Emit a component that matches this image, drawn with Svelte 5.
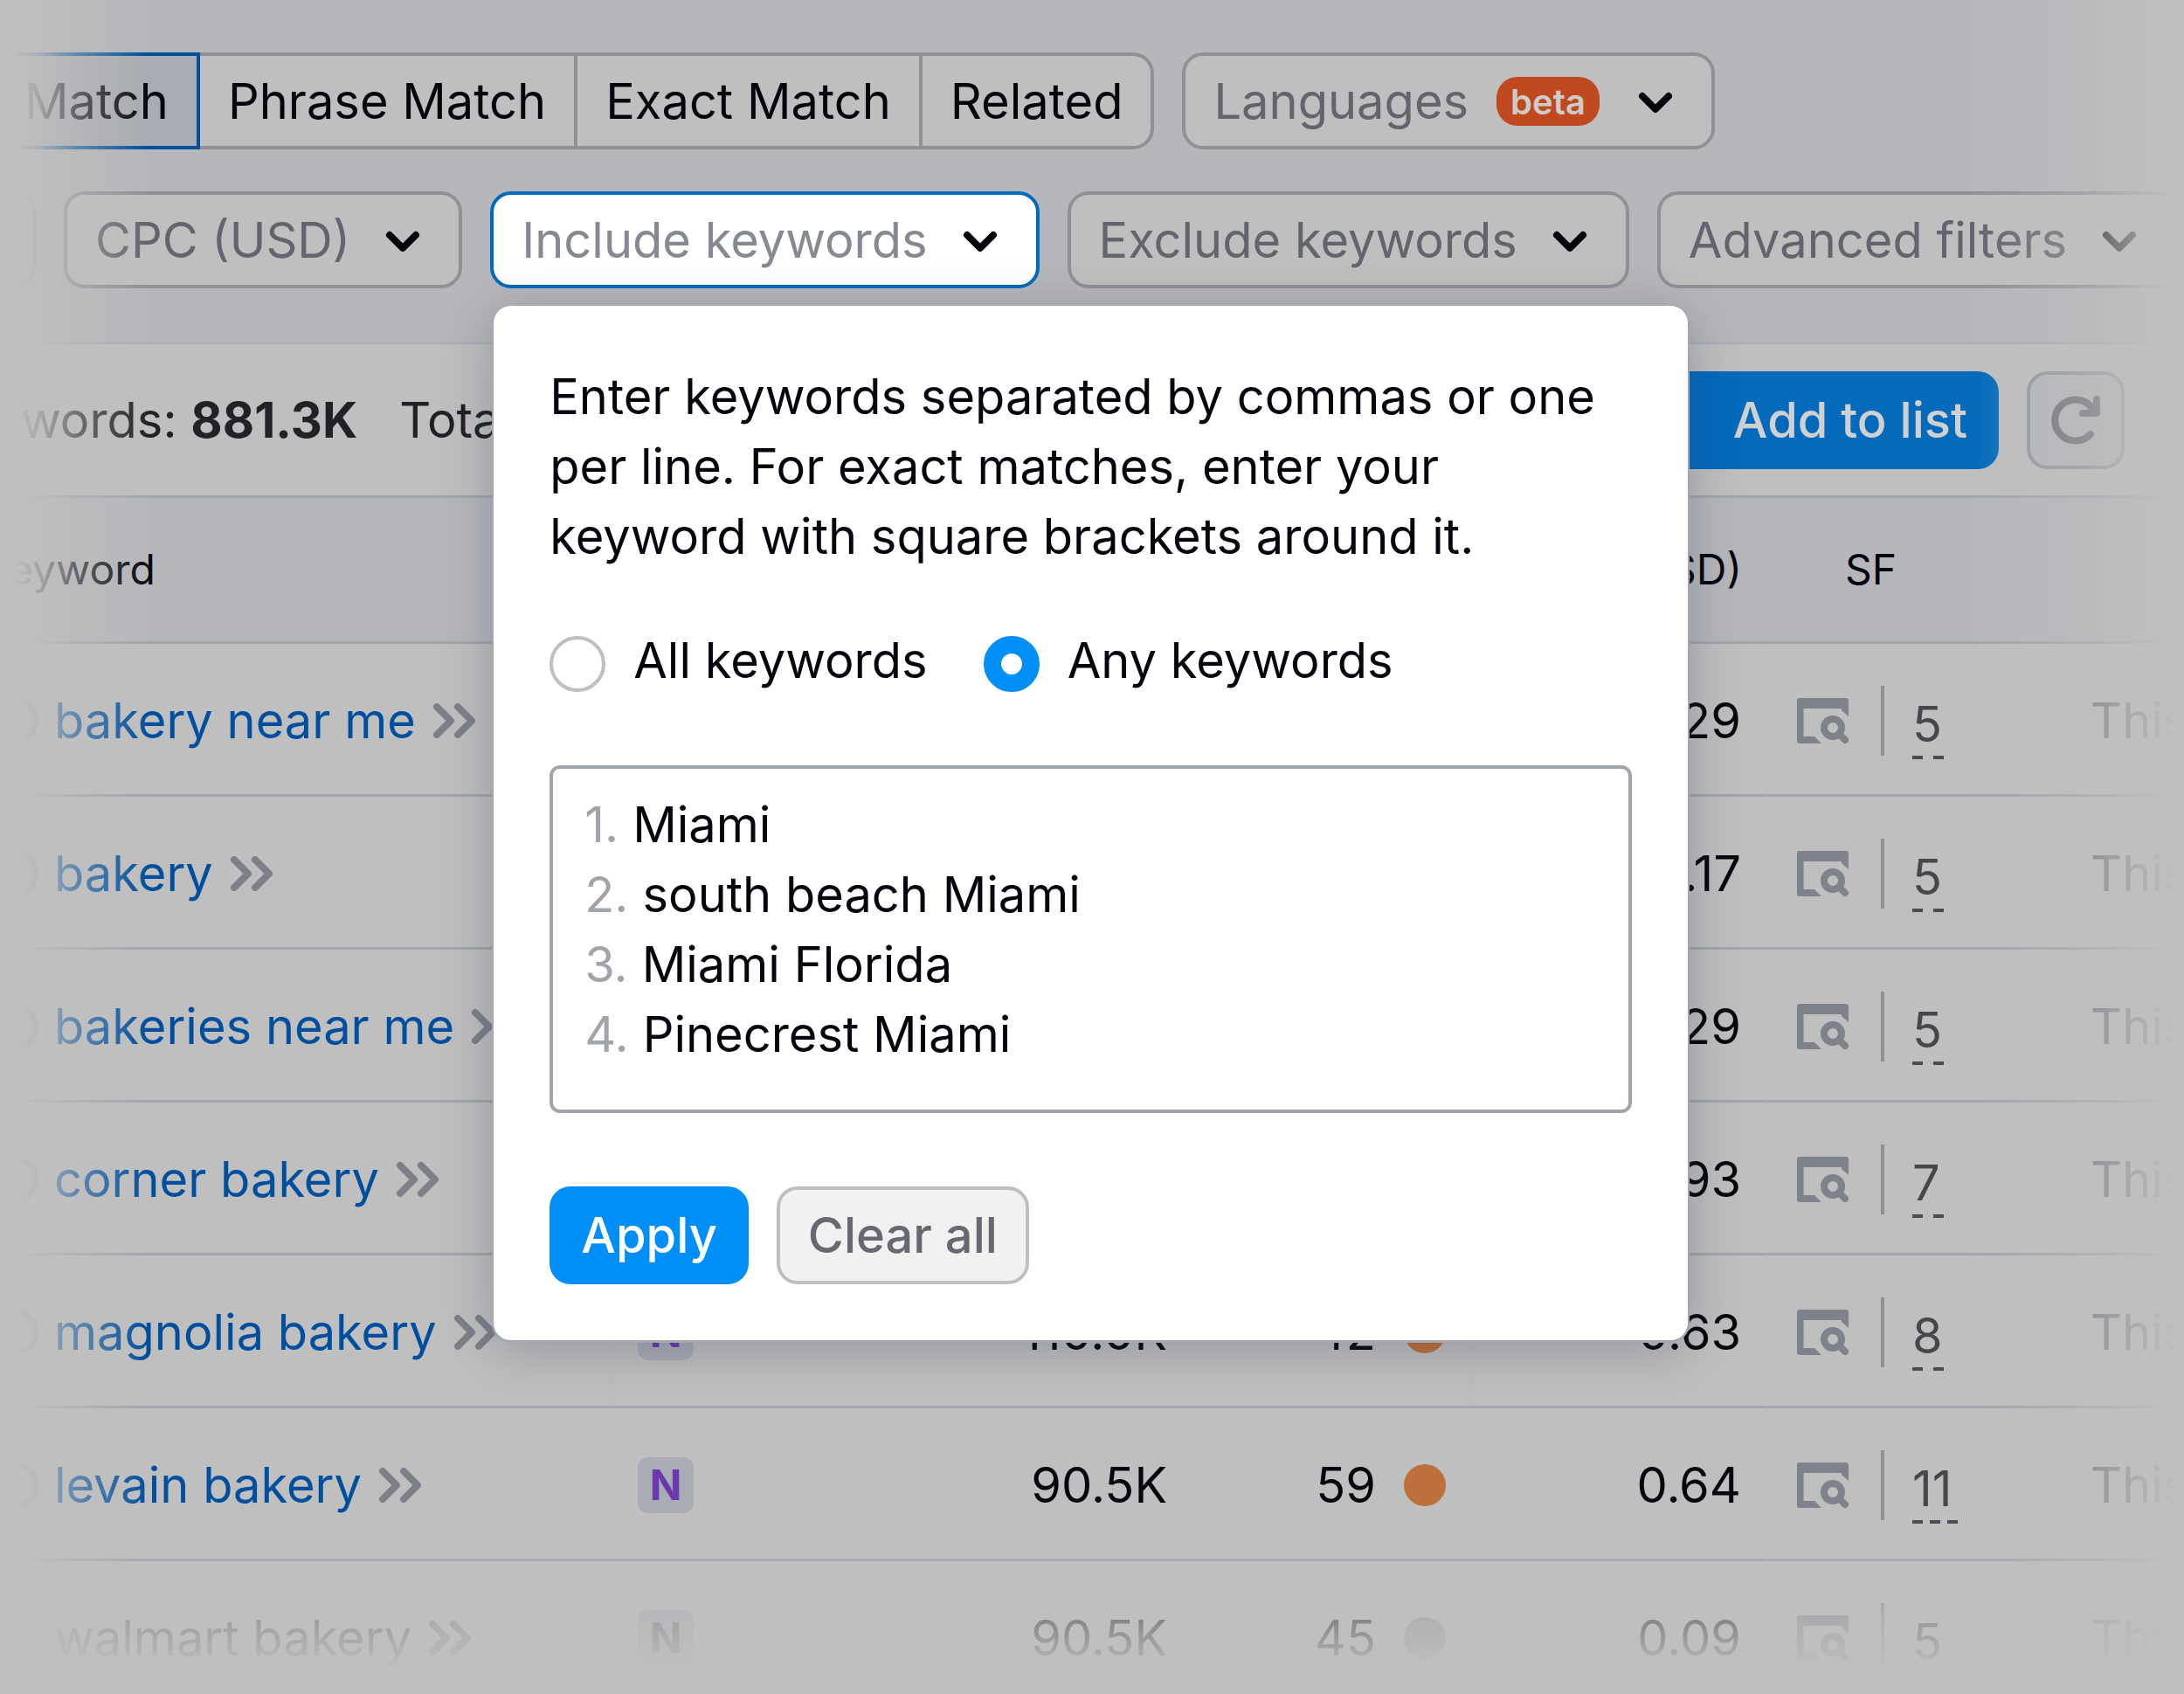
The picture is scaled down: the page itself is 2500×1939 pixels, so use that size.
<script>
  const matchTypes = ['Match', 'Phrase Match', 'Exact Match', 'Related'];
  let activeType = $state('Match');
  let mode = $state('any');
  let terms = $state(['Miami', 'south beach Miami', 'Miami Florida', 'Pinecrest Miami']);

  const rows = [
    { keyword: 'bakery near me', cpc: '1.29', sf: '5' },
    { keyword: 'bakery', cpc: '1.17', sf: '5' },
    { keyword: 'bakeries near me', cpc: '1.29', sf: '5' },
    { keyword: 'corner bakery', cpc: '0.93', sf: '7' },
    { keyword: 'magnolia bakery', intent: 'N', volume: '110.0K', kd: '42', cpc: '0.63', sf: '8' },
    { keyword: 'levain bakery', intent: 'N', volume: '90.5K', kd: '59', cpc: '0.64', sf: '11' },
    { keyword: 'walmart bakery', intent: 'N', volume: '90.5K', kd: '45', cpc: '0.09', sf: '5' }
  ];
</script>

{#snippet chevron()}
  <svg class="chevron" viewBox="0 0 40 26" aria-hidden="true">
    <path d="M5 5 20 20 35 5" />
  </svg>
{/snippet}

<main class="page">
  <section class="filters">
    <div class="bar">
      <div class="segments" role="group" aria-label="Match type">
        {#each matchTypes as type}
          <button class="segment" class:active={activeType === type} onclick={() => (activeType = type)}>{type}</button>
        {/each}
      </div>
      <button class="pill">Languages <span class="beta">beta</span>{@render chevron()}</button>
    </div>
    <div class="bar">
      <button class="pill stub" aria-label="More filters"></button>
      <button class="pill">CPC (USD) {@render chevron()}</button>
      <div class="anchor">
        <button class="pill open" aria-expanded="true">Include keywords {@render chevron()}</button>
        <div class="popover" role="dialog" aria-label="Include keywords">
          <p>Enter keywords separated by commas or one per line. For exact matches, enter your keyword with square brackets around it.</p>
          <div class="radios">
            <label><input type="radio" name="mode" value="all" bind:group={mode} /><span>All keywords</span></label>
            <label><input type="radio" name="mode" value="any" bind:group={mode} /><span>Any keywords</span></label>
          </div>
          <div class="terms">
            {#each terms as _, i}
              <label class="term"><span>{i + 1}.</span><input type="text" bind:value={terms[i]} /></label>
            {/each}
          </div>
          <div class="actions">
            <button class="apply">Apply</button>
            <button class="clear">Clear all</button>
          </div>
        </div>
      </div>
      <button class="pill">Exclude keywords {@render chevron()}</button>
      <button class="pill">Advanced filters {@render chevron()}</button>
    </div>
  </section>

  <section class="summary">
    <span>words: <b>881.3K</b></span>
    <span>Total</span>
    <div class="tools">
      <button class="add">Add to list</button>
      <button class="refresh" aria-label="Refresh">
        <svg viewBox="0 0 56 56" aria-hidden="true">
          <path d="M45 44A23.500 23.500 0 1 1 49 18" />
          <path d="M52 4V20H36" />
        </svg>
      </button>
    </div>
  </section>

  <table>
    <colgroup>
      <col class="c-keyword" /><col class="c-intent" /><col class="c-volume" /><col class="c-kd" /><col class="c-cpc" /><col class="c-sf" /><col />
    </colgroup>
    <thead>
      <tr>
        <th class="first">eyword</th>
        <th></th>
        <th></th>
        <th></th>
        <th class="num">CPC (USD)</th>
        <th class="center">SF</th>
        <th></th>
      </tr>
    </thead>
    <tbody>
      {#each rows as row}
        <tr>
          <td>
            <div class="keyword">
              <span class="ring"></span>
              <a href="#keyword">{row.keyword}</a>
              <svg class="double" viewBox="0 0 48 40" aria-hidden="true">
                <path d="M4 4 20 20 4 36M28 4 44 20 28 36" />
              </svg>
            </div>
          </td>
          <td class="open-edge">{#if row.intent}<span class="intent">{row.intent}</span>{/if}</td>
          <td class="num open-edge">{row.volume ?? ''}</td>
          <td>{#if row.kd}<div class="kd">{row.kd}<span class="dot"></span></div>{/if}</td>
          <td class="num">{row.cpc}</td>
          <td>
            <div class="serp">
              <svg viewBox="0 0 60 52" aria-hidden="true">
                <path class="frame" d="M3 0H56Q59 0 59 3V21L51 14V12H7.500V44H20L28 52H3Q0 52 0 49V3Q0 0 3 0Z" />
                <circle cx="41" cy="34" r="10" />
                <path class="handle" d="M48 41 55 48" />
              </svg>
              <span class="rule"></span>
              <a class="count" class:wide={row.sf.length > 1} href="#serp">{row.sf}</a>
            </div>
          </td>
          <td class="updated">This</td>
        </tr>
      {/each}
    </tbody>
  </table>
</main>

<style>
  :global(body) {
    margin: 0;
    background: #bfbfbf;
  }
  .page {
    position: relative;
    height: 100vh;
    overflow: hidden;
    background: #bfbfbf;
    color: #05060d;
    font: 400 56px/80px Inter, sans-serif;
  }
  .page::before,
  .page::after {
    content: '';
    position: absolute;
    inset: 0;
    z-index: 1;
    pointer-events: none;
  }
  .page::before {
    background: linear-gradient(90deg, #bfbfbf 16px, rgba(191, 191, 191, 0.85) 46px, rgba(191, 191, 191, 0.5) 88px, transparent 170px, transparent calc(100% - 240px), rgba(191, 191, 191, 0.45) calc(100% - 110px), rgba(191, 191, 191, 0.8) calc(100% - 50px), #bfbfbf calc(100% - 8px));
  }
  .page::after {
    background: linear-gradient(0deg, #bfbfbf 24px, rgba(191, 191, 191, 0.9) 44px, rgba(191, 191, 191, 0.72) 80px, rgba(191, 191, 191, 0.5) 110px, rgba(191, 191, 191, 0.2) 150px, transparent 200px);
  }
  button,
  input {
    font: inherit;
    color: inherit;
    margin: 0;
  }
  button {
    box-sizing: border-box;
    cursor: pointer;
    white-space: nowrap;
  }
  a {
    text-decoration: none;
  }

  .filters {
    display: flex;
    flex-direction: column;
    gap: 48px;
    padding: 60px 0 62px;
    background: #b6b7bb;
    border-bottom: 2px solid #a6abb2;
  }
  .bar {
    display: flex;
    gap: 32px;
  }
  .segments {
    display: flex;
  }
  .segment {
    height: 111px;
    padding: 0 32px;
    border: 4px solid #8f9197;
    border-left-width: 0;
    background: #bfbfbf;
  }
  .segment:last-child {
    border-radius: 0 24px 24px 0;
  }
  .segment.active {
    padding-left: 28px;
    border-color: #00509e;
    background: #a9acb2;
  }
  .pill {
    display: flex;
    align-items: center;
    flex: none;
    height: 111px;
    padding: 0 44px 0 32px;
    border: 4px solid #8f9197;
    border-radius: 24px;
    background: #bfbfbf;
    color: #62656e;
  }
  .pill.stub {
    width: 41px;
    padding: 0;
    border-left: 0;
    border-radius: 0 24px 24px 0;
  }
  .pill.open {
    border-color: #006abd;
    background: #fff;
    color: #858992;
  }
  .chevron {
    width: 40px;
    height: 26px;
    margin: 4px 0 0 40px;
    fill: none;
    stroke: #05060d;
    stroke-width: 8;
    stroke-linecap: round;
    stroke-linejoin: round;
  }
  .beta {
    height: 56px;
    margin-left: 32px;
    padding: 0 16px;
    border-radius: 24px;
    background: #bf4a1f;
    color: #cfcbc9;
    font-size: 40px;
    font-weight: 600;
    line-height: 58px;
  }
  .beta + .chevron {
    margin-left: 44px;
  }

  .anchor {
    position: relative;
    z-index: 2;
  }
  .popover {
    position: absolute;
    top: calc(100% + 20px);
    left: 4px;
    box-sizing: border-box;
    width: 1367px;
    padding: 64px;
    border-radius: 20px;
    background: #fff;
    box-shadow: 0 1px 0 2px #a4a8ae, 0 10px 60px rgba(40, 50, 80, 0.3);
  }
  .popover p {
    margin: 0;
  }
  .radios {
    display: flex;
    gap: 64px;
    margin: 62px 0 80px;
  }
  .radios label {
    display: flex;
    align-items: flex-start;
    gap: 32px;
  }
  .radios input {
    appearance: none;
    box-sizing: border-box;
    width: 64px;
    height: 64px;
    margin-top: 12px;
    border: 4px solid #bfbfbf;
    border-radius: 50%;
    background: #fff;
  }
  .radios input:checked {
    border: 20px solid #008ff8;
  }
  .terms {
    padding: 24px 36px 46px;
    border: 4px solid #a0a4ab;
    border-radius: 12px;
  }
  .term {
    display: flex;
    gap: 16px;
    color: #a0a4ab;
  }
  .term input {
    flex: 1;
    min-width: 0;
    height: 80px;
    padding: 0;
    border: 0;
    outline: 0;
    background: none;
    color: #05060d;
  }
  .actions {
    display: flex;
    gap: 32px;
    margin-top: 84px;
  }
  .apply,
  .clear {
    height: 112px;
    border-radius: 24px;
    font-weight: 500;
  }
  .apply {
    padding: 0 36px;
    border: 0;
    background: #008ff8;
    color: #fff;
  }
  .clear {
    padding: 0 32px;
    border: 4px solid #bfbfbf;
    background: #f1f1f1;
    color: #666972;
  }

  .summary {
    display: flex;
    align-items: center;
    gap: 48px;
    height: 173px;
    padding-left: 24px;
    color: #202227;
  }
  .summary b {
    font-weight: 700;
  }
  .tools {
    display: flex;
    gap: 32px;
    margin-left: auto;
    padding-right: 68px;
  }
  .add {
    height: 112px;
    padding: 0 36px 0 120px;
    border: 0;
    border-radius: 24px;
    background: #046abb;
    color: #d0d0d0;
    font-weight: 500;
  }
  .refresh {
    display: grid;
    place-items: center;
    width: 112px;
    height: 112px;
    padding: 0;
    border: 4px solid #91969f;
    border-radius: 24px;
    background: #b6b7bb;
  }
  .refresh svg {
    width: 56px;
    height: 56px;
    fill: none;
    stroke: #6a6d75;
    stroke-width: 8;
    stroke-linecap: round;
    stroke-linejoin: round;
  }

  table {
    width: 100%;
    table-layout: fixed;
    border-collapse: separate;
    border-spacing: 0;
  }
  .c-keyword { width: 698px; }
  .c-intent { width: 202px; }
  .c-volume { width: 466px; }
  .c-kd { width: 320px; }
  .c-cpc { width: 338px; }
  .c-sf { width: 235px; }
  th,
  td {
    box-sizing: border-box;
    padding: 0;
    border-bottom: 3px solid #a2a5ad;
    text-align: left;
    white-space: nowrap;
  }
  th {
    height: 170px;
    border-top: 3px solid #a2a5ad;
    background: #b6b7bb;
    font-size: 48px;
    font-weight: 400;
  }
  td {
    height: 175px;
    padding-top: 3px;
    border-right: 1px solid #bbbbbc;
  }
  td.open-edge {
    border-right: 0;
  }
  th.first {
    padding-left: 10px;
  }
  .num {
    padding-right: 30px;
    text-align: right;
  }
  .center {
    text-align: center;
  }
  .keyword {
    display: flex;
    align-items: center;
  }
  .keyword a {
    margin: 0 20px 0 18px;
    color: #004f9e;
  }
  .ring {
    box-sizing: border-box;
    width: 56px;
    height: 56px;
    margin-left: -12px;
    border: 7px solid #8f929a;
    border-radius: 50%;
  }
  .double {
    width: 48px;
    height: 40px;
    fill: none;
    stroke: #7d8088;
    stroke-width: 8;
    stroke-linecap: round;
    stroke-linejoin: round;
  }
  .intent {
    display: block;
    width: 64px;
    margin-left: 32px;
    border-radius: 12px;
    background: #a9acb4;
    color: #6a3aac;
    font-size: 48px;
    font-weight: 700;
    line-height: 64px;
    text-align: center;
  }
  .kd {
    display: flex;
    align-items: center;
    justify-content: flex-end;
    gap: 32px;
    padding-right: 30px;
  }
  .dot {
    width: 48px;
    height: 48px;
    border-radius: 50%;
    background: #bd703b;
  }
  .serp {
    display: flex;
    align-items: center;
    padding-left: 33px;
  }
  .serp svg {
    width: 60px;
    height: 52px;
    fill: none;
    stroke: #7e828a;
    stroke-width: 8;
    stroke-linecap: round;
  }
  .serp .frame {
    fill: #7e828a;
    stroke: none;
  }
  .rule {
    width: 4px;
    height: 80px;
    margin: 0 32px 0 36px;
    background: #8f9197;
  }
  .count {
    min-width: 36px;
    margin-top: 8px;
    background: repeating-linear-gradient(90deg, #4a4c53 0 12px, transparent 12px 24px) 0 100% / 100% 4px no-repeat;
    color: #45474d;
  }
  .count.wide {
    min-width: 52px;
    background-image: repeating-linear-gradient(90deg, #4a4c53 0 12px, transparent 12px 20px);
  }
  .updated {
    padding-left: 134px;
    border-right: 0;
    color: #6a6d75;
  }
  tbody tr:last-child .keyword a {
    color: #50545d;
  }
  tbody tr:last-child .intent {
    color: #62656e;
  }
  tbody tr:last-child .dot {
    background: #8f9299;
  }
</style>
